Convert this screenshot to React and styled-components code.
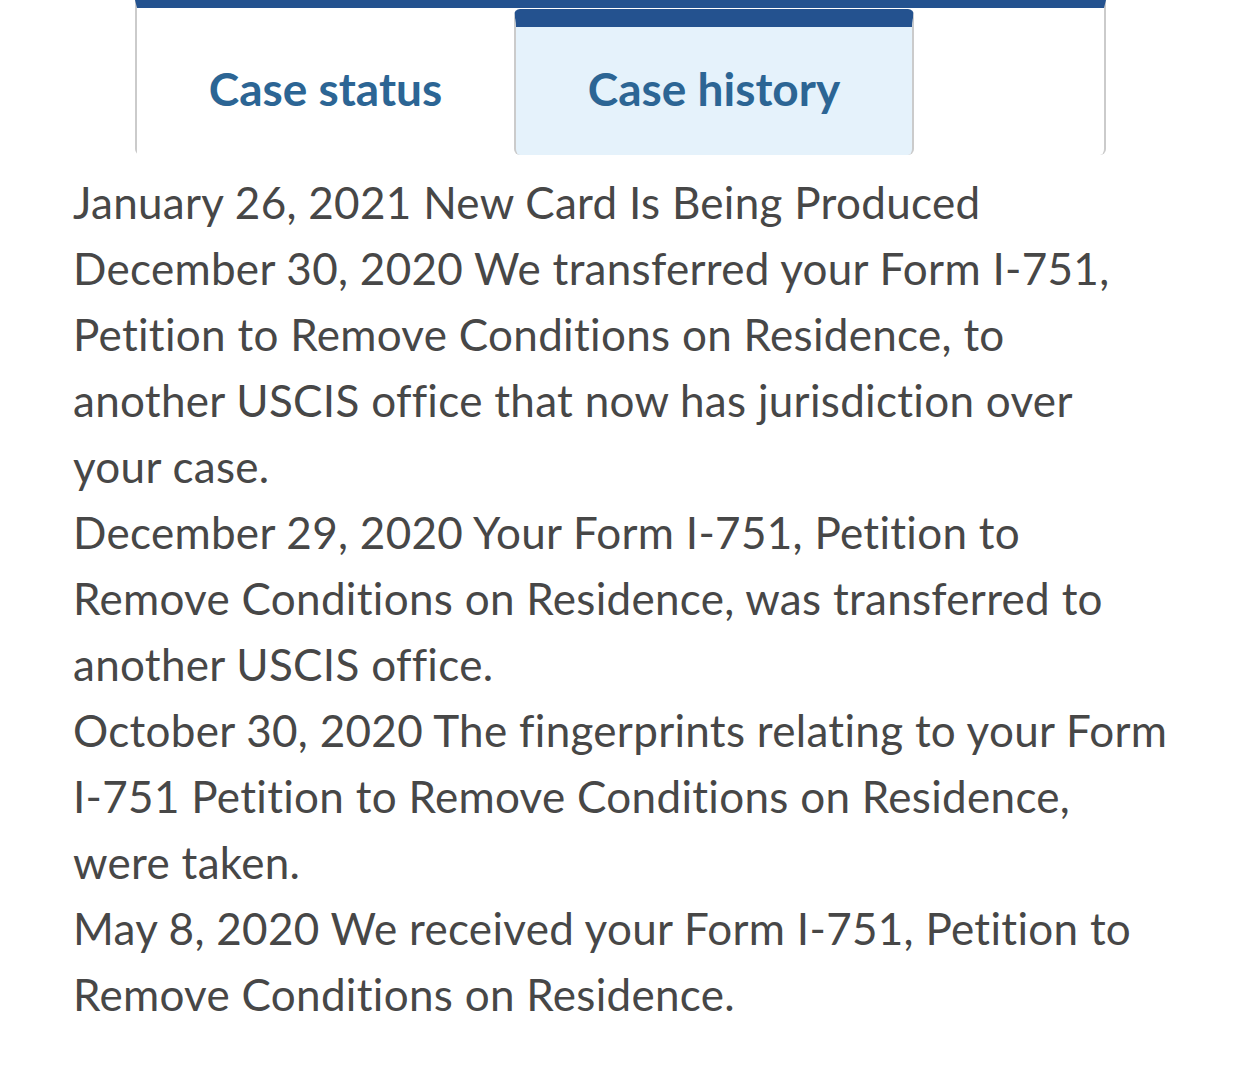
import React from "react";
import styled, { createGlobalStyle } from "styled-components";

const GlobalStyle = createGlobalStyle`
  html, body {
    margin: 0;
    padding: 0;
    background: #ffffff;
  }
  body {
    font-family: Lato, "Open Sans", "Liberation Sans", sans-serif;
  }
`;

const Page = styled.div`
  width: 1242px;
  height: 1080px;
  overflow: hidden;
  background: #ffffff;
`;

const TabBar = styled.div`
  display: flex;
  margin-left: 135px;
  width: 967px;
  height: 147px;
  box-sizing: content-box;
  border-top: 8px solid #24528f;
  border-left: 2px solid #cbcbcb;
  border-right: 2px solid #cbcbcb;
  border-radius: 0 0 6px 6px;
`;

const Tab = styled.div`
  display: flex;
  align-items: center;
  justify-content: center;
  box-sizing: border-box;
  width: ${(p) => p.$width}px;
  font-size: 46px;
  font-weight: 700;
  color: #2c6594;
  background: ${(p) => (p.$active ? "#e5f2fb" : "#ffffff")};
  padding-top: ${(p) => (p.$active ? 0 : 13)}px;
  padding-bottom: ${(p) => (p.$active ? 6 : 0)}px;
  ${(p) =>
    p.$active &&
    `
    margin-top: 1px;
    border-top: 18px solid #24528f;
    border-left: 2px solid #cbcbcb;
    border-right: 2px solid #cbcbcb;
    border-radius: 6px;
  `}
`;

const History = styled.div`
  padding: 14px 0 0 73px;
  font-size: 44px;
  line-height: 66px;
  letter-spacing: 0.3px;
  color: #474747;
`;

const Entry = styled.p`
  margin: 0;
`;

const Line = styled.span`
  display: block;
  white-space: nowrap;
`;

const entries = [
  ["January 26, 2021 New Card Is Being Produced"],
  [
    "December 30, 2020 We transferred your Form I-751,",
    "Petition to Remove Conditions on Residence, to",
    "another USCIS office that now has jurisdiction over",
    "your case.",
  ],
  [
    "December 29, 2020 Your Form I-751, Petition to",
    "Remove Conditions on Residence, was transferred to",
    "another USCIS office.",
  ],
  [
    "October 30, 2020 The fingerprints relating to your Form",
    "I-751 Petition to Remove Conditions on Residence,",
    "were taken.",
  ],
  [
    "May 8, 2020 We received your Form I-751, Petition to",
    "Remove Conditions on Residence.",
  ],
];

export default function App() {
  return (
    <Page>
      <GlobalStyle />
      <TabBar>
        <Tab $width={377}>Case status</Tab>
        <Tab $width={400} $active>
          Case history
        </Tab>
      </TabBar>
      <History>
        {entries.map((lines) => (
          <Entry key={lines[0]}>
            {lines.map((l) => (
              <Line key={l}>{l}</Line>
            ))}
          </Entry>
        ))}
      </History>
    </Page>
  );
}
